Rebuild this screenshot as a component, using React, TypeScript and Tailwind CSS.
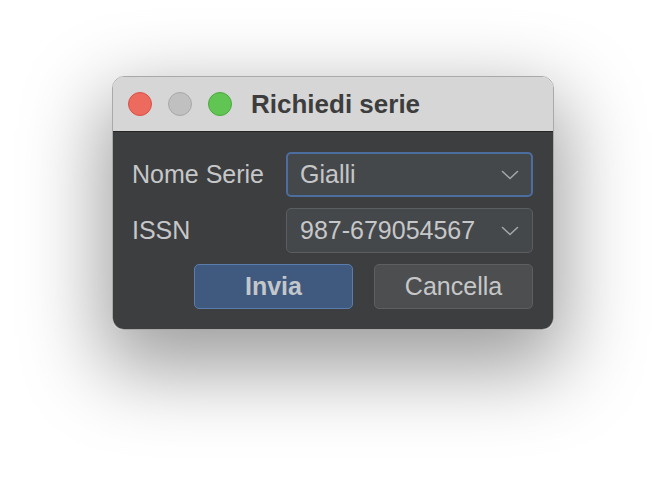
import React from "react";

function Chevron() {
  return (
    <svg width="18" height="10" viewBox="0 0 18 10" className="shrink-0">
      <path d="M1.5 1.5 L9 8.5 L16.5 1.5" fill="none" stroke="#a3a5a7" strokeWidth="1.6" strokeLinecap="round" strokeLinejoin="round" />
    </svg>
  );
}

function Combo({ value, focused }: { value: string; focused?: boolean }) {
  return (
    <div
      className={
        focused
          ? "flex h-[45px] w-[247px] items-center justify-between rounded-[5px] border-2 border-[#4b6e9e] bg-[#45484b] pl-[12px] pr-[12px]"
          : "flex h-[45px] w-[247px] items-center justify-between rounded-[5px] border border-[#5b5d60] bg-[#45484b] pl-[13px] pr-[13px]"
      }
    >
      <span className="text-[25px] leading-none text-[#c6c7c8]">{value}</span>
      <Chevron />
    </div>
  );
}

export default function App() {
  return (
    <div
      className="min-h-[478px] w-[666px] bg-white pl-[112px] pt-[76px]"
      style={{ fontFamily: '"Liberation Sans", Arial, sans-serif' }}
    >
      <div className="w-[442px] overflow-hidden rounded-[12px] border border-[#a9a9a9] shadow-[0_30px_80px_10px_rgba(0,0,0,0.38)]">
        <div className="flex h-[55px] items-center border-b border-[#262626] bg-[#d6d6d6] pl-[15px]">
          <div className="flex items-center gap-[16px]">
            <span className="h-[24px] w-[24px] rounded-full border border-[#d95147] bg-[#ed6a5e]" />
            <span className="h-[24px] w-[24px] rounded-full border border-[#a9a9a9] bg-[#c0c0c0]" />
            <span className="h-[24px] w-[24px] rounded-full border border-[#4aaa3c] bg-[#61c554]" />
          </div>
          <span className="ml-[19px] text-[26px] font-bold leading-none text-[#3d3d3d]">Richiedi serie</span>
        </div>
        <div className="flex flex-col gap-[11px] bg-[#3d3e40] pb-[20px] pl-[19px] pr-[20px] pt-[20px]">
          <div className="flex items-center justify-between">
            <span className="text-[25px] leading-none text-[#c6c7c8]">Nome Serie</span>
            <Combo value="Gialli" focused />
          </div>
          <div className="flex items-center justify-between">
            <span className="text-[25px] leading-none text-[#c6c7c8]">ISSN</span>
            <Combo value="987-679054567" />
          </div>
          <div className="flex justify-end gap-[21px]">
            <button className="flex h-[45px] w-[159px] items-center justify-center rounded-[5px] border border-[#5a7dad] bg-[#3f5a7e] text-[25px] font-bold leading-none text-[#c3c6ca]">
              Invia
            </button>
            <button className="flex h-[45px] w-[159px] items-center justify-center rounded-[5px] border border-[#5d5f61] bg-[#4d4e50] text-[25px] leading-none text-[#c6c7c8]">
              Cancella
            </button>
          </div>
        </div>
      </div>
    </div>
  );
}
